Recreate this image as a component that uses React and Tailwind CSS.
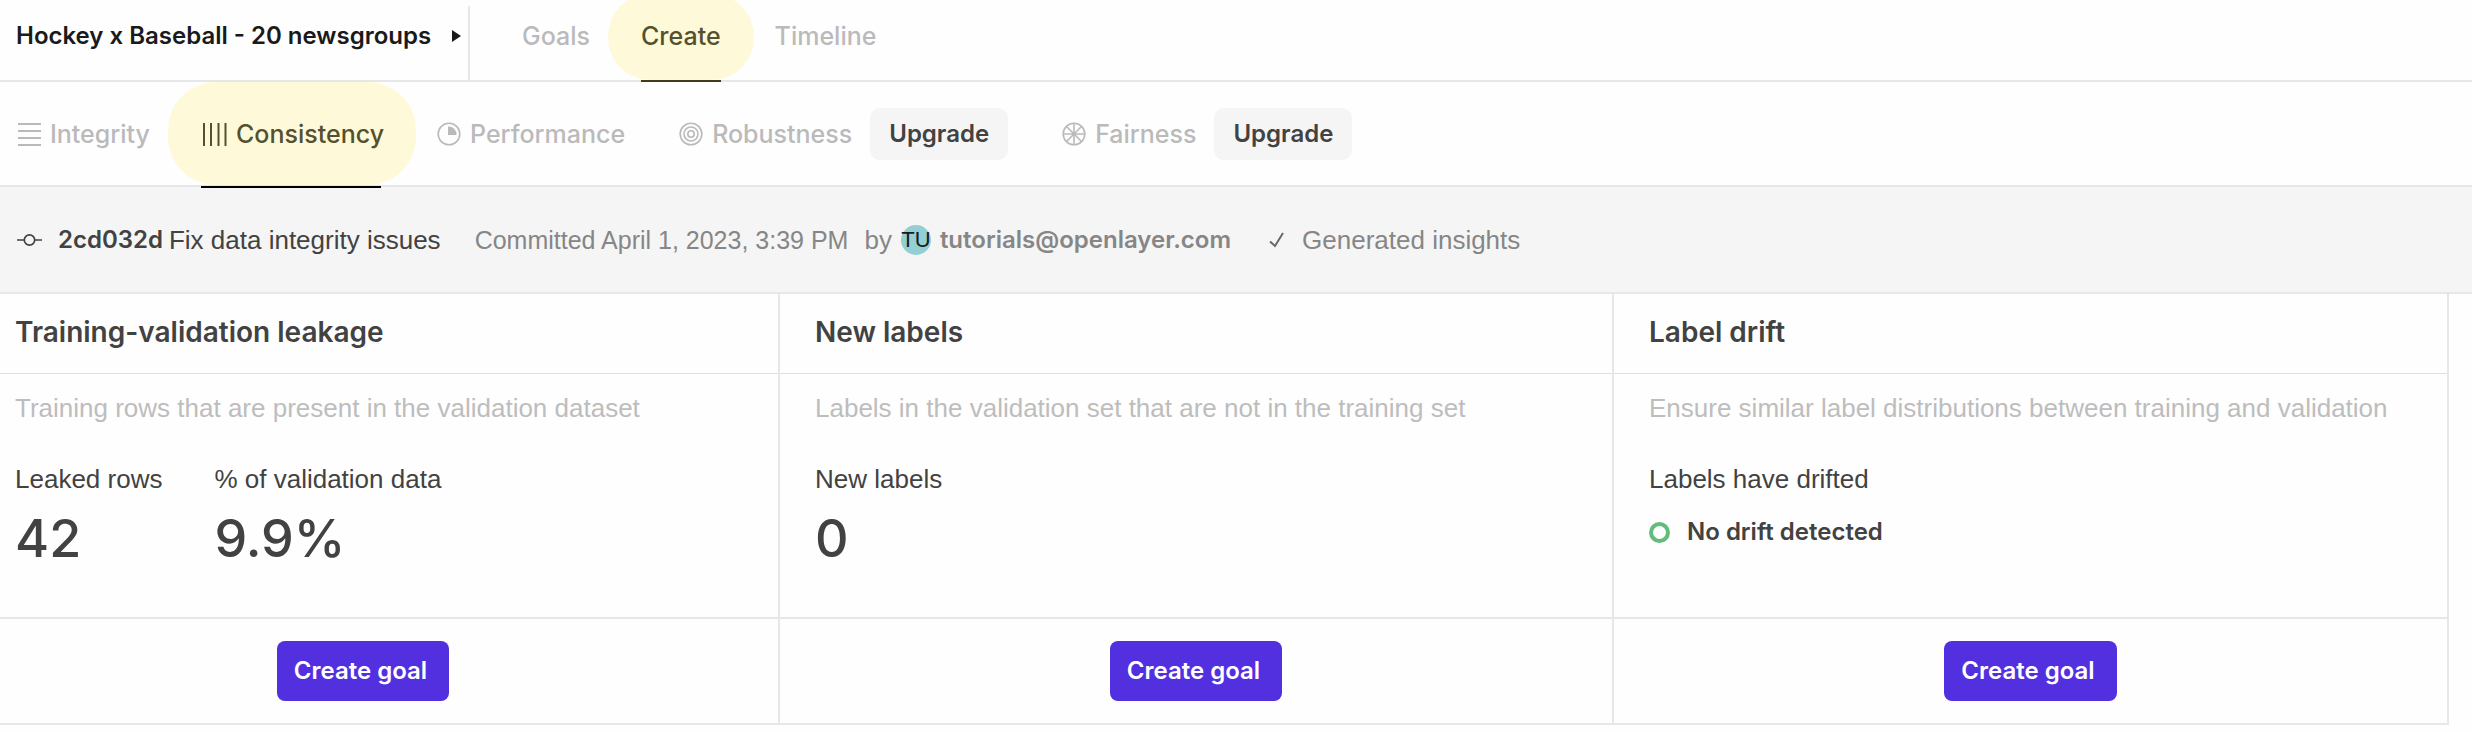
import React from 'react';

const sans = "font-['Liberation_Sans',Arial,sans-serif] text-[26px] leading-9";
const medium = "font-[Inter,sans-serif] font-medium text-[25px] leading-9";
const strong = "font-[Inter,sans-serif] font-semibold text-[24px] leading-9";

function LinesIcon() {
  return (
    <svg className="size-6 shrink-0" viewBox="0 0 24 24" fill="none" stroke="currentColor" strokeWidth="2" aria-hidden="true">
      <path d="M0 2h23M0 9h23M0 16h23M0 23h23" />
    </svg>
  );
}

function BarsIcon() {
  return (
    <svg className="size-6 shrink-0" viewBox="0 0 24 24" fill="none" stroke="currentColor" strokeWidth="2" aria-hidden="true">
      <path d="M1 1v23M8 1v23M15.500 1v23M22.500 1v23" />
    </svg>
  );
}

function PieIcon() {
  return (
    <svg className="size-6 shrink-0" viewBox="0 0 24 24" fill="none" stroke="currentColor" strokeWidth="1.6" aria-hidden="true">
      <circle cx="12" cy="12" r="10.800" />
      <path d="M11 4.500a8 8 0 0 1 8.500 8.500H11z" fill="currentColor" stroke="none" />
    </svg>
  );
}

function TargetIcon() {
  return (
    <svg className="size-6 shrink-0" viewBox="0 0 24 24" fill="none" stroke="currentColor" strokeWidth="1.6" aria-hidden="true">
      <circle cx="12" cy="12" r="10.800" />
      <circle cx="12" cy="12" r="7" />
      <circle cx="12" cy="12" r="3.200" />
    </svg>
  );
}

function WheelIcon() {
  return (
    <svg className="size-6 shrink-0" viewBox="0 0 24 24" fill="none" stroke="currentColor" strokeWidth="1.6" aria-hidden="true">
      <circle cx="12" cy="12" r="10.800" />
      <path d="M12 1v22M1 12h22M4.300 4.300l15.400 15.400M19.700 4.300L4.300 19.700" />
    </svg>
  );
}

function UpgradeButton() {
  return (
    <button type="button" className={`${strong} h-[52px] rounded-[10px] bg-[#f5f5f5] px-[19px] text-[#424242]`}>
      Upgrade
    </button>
  );
}

function Card({ title, description, first, children }) {
  return (
    <section className="flex flex-col border-r-2 border-b-2 border-[#e7e7e7]">
      <h2 className={`flex h-20 items-center border-b border-[#dfdfdf] pb-1 font-[Inter,sans-serif] text-[28px] leading-9 font-semibold text-[#424242] ${first ? 'pl-[15px]' : 'pl-[35px]'}`}>
        {title}
      </h2>
      <div className={`${sans} flex-1 pt-4 pb-11 text-[#424242] ${first ? 'pl-[15px]' : 'pl-[35px]'}`}>
        <p className="whitespace-nowrap text-[#bdbdbd]">{description}</p>
        <dl className="mt-[35px] flex gap-[52px]">{children}</dl>
      </div>
      <div className={`flex h-[106px] items-center justify-center border-t-2 border-[#e7e7e7] ${first ? 'pr-[52px]' : ''}`}>
        <button type="button" className={`${strong} h-[60px] rounded-lg bg-[#5230df] pr-[22px] pl-[17px] text-white`}>
          Create goal
        </button>
      </div>
    </section>
  );
}

function Stat({ label, value }) {
  return (
    <div>
      <dt>{label}</dt>
      <dd className="mt-2 font-[Inter,sans-serif] text-[52px] leading-[68px] font-medium">{value}</dd>
    </div>
  );
}

export default function App() {
  return (
    <main className="min-h-screen overflow-x-hidden bg-[#fefefe] whitespace-nowrap">
      <header className="flex h-[82px] border-b-2 border-[#e7e7e7]">
        <div className="mt-[6px] flex w-[470px] items-center justify-between border-r-2 border-[#e7e7e7] pr-[7px] pb-[14px] pl-4">
          <h1 className={`${strong} text-[#1a1a1a]`}>Hockey x Baseball - 20 newsgroups</h1>
          <button type="button" aria-label="Switch project">
            <svg className="h-3 w-[9px]" viewBox="0 0 9 12" fill="#1a1a1a" aria-hidden="true">
              <path d="M0 0l9 6-9 6z" />
            </svg>
          </button>
        </div>
        <nav className={`${medium} flex pl-[52px] text-[#bababa]`}>
          <a href="#goals" className="mr-[18px] flex items-center pb-2">Goals</a>
          <a href="#create" aria-current="page" className="relative -mt-[6px] flex items-center rounded-[42px] bg-[#fefad9] px-[33px] pb-[2px] text-[#55502d]">
            Create
            <span className="absolute inset-x-[33px] -bottom-[2px] h-[2px] bg-[#403b18]" />
          </a>
          <a href="#timeline" className="ml-[21px] flex items-center pb-2">Timeline</a>
        </nav>
      </header>

      <nav className={`${medium} flex h-[105px] items-center border-b-2 border-[#e7e7e7] pl-[18px] text-[#bababa]`}>
        <a href="#integrity" className="flex items-center gap-[8px]"><LinesIcon />Integrity</a>
        <a href="#consistency" aria-current="page" className="relative ml-[18px] flex h-full items-center gap-[9px] rounded-[48px] bg-[#fefad9] pr-[32px] pl-[35px] text-[#55502d]">
          <BarsIcon />
          Consistency
          <span className="absolute right-[35px] -bottom-[3px] left-[33px] h-[2px] bg-black" />
        </a>
        <a href="#performance" className="ml-[21px] flex items-center gap-[9px]"><PieIcon />Performance</a>
        <a href="#robustness" className="ml-[54px] flex items-center gap-[9px]"><TargetIcon />Robustness</a>
        <span className="ml-[18px] flex"><UpgradeButton /></span>
        <a href="#fairness" className="ml-[54px] flex items-center gap-[9px]"><WheelIcon />Fairness</a>
        <span className="ml-[18px] flex"><UpgradeButton /></span>
      </nav>

      <div className={`${sans} flex h-[107px] items-center border-b-2 border-[#e7e7e7] bg-[#f5f5f5] pl-[17px] text-[#868686]`}>
        <svg className="h-6 w-[25px]" viewBox="0 0 25 24" fill="none" stroke="#424242" strokeWidth="1.7" aria-hidden="true">
          <path d="M0 12h7.500M17.500 12H25" />
          <circle cx="12.500" cy="12" r="5.200" />
        </svg>
        <p className="ml-4 flex items-center gap-[6px] text-[#424242]">
          <span className={strong}>2cd032d</span>
          <span>Fix data integrity issues</span>
        </p>
        <p className="ml-[34px] flex items-center">
          <span className="text-[25px]">Committed April 1, 2023, 3:39 PM</span>
          <span className="ml-4">by</span>
          <span className="ml-[9px] flex size-[30px] items-center justify-center rounded-full bg-[#93cfd3] text-[22px] text-[#1a1a1a]">TU</span>
          <span className={`${strong} ml-[9px]`}>tutorials@openlayer.com</span>
        </p>
        <svg className="ml-[38px] h-4 w-[15px]" viewBox="0 0 15 16" fill="none" stroke="#686868" strokeWidth="2" aria-hidden="true">
          <path d="M1 9.500l5 4.500L14 1" />
        </svg>
        <span className="ml-[18px]">Generated insights</span>
      </div>

      <div className="mr-[23px] grid grid-cols-[780fr_834fr_835fr]">
        <Card first title="Training-validation leakage" description="Training rows that are present in the validation dataset">
          <Stat label="Leaked rows" value="42" />
          <Stat label="% of validation data" value="9.9%" />
        </Card>
        <Card title="New labels" description="Labels in the validation set that are not in the training set">
          <Stat label="New labels" value="0" />
        </Card>
        <Card title="Label drift" description="Ensure similar label distributions between training and validation">
          <div>
            <dt>Labels have drifted</dt>
            <dd className={`${strong} mt-2 flex h-[54px] items-center gap-[17px]`}>
              <span className="size-[21px] rounded-full border-4 border-[#62bd7a]" />
              No drift detected
            </dd>
          </div>
        </Card>
      </div>
    </main>
  );
}
